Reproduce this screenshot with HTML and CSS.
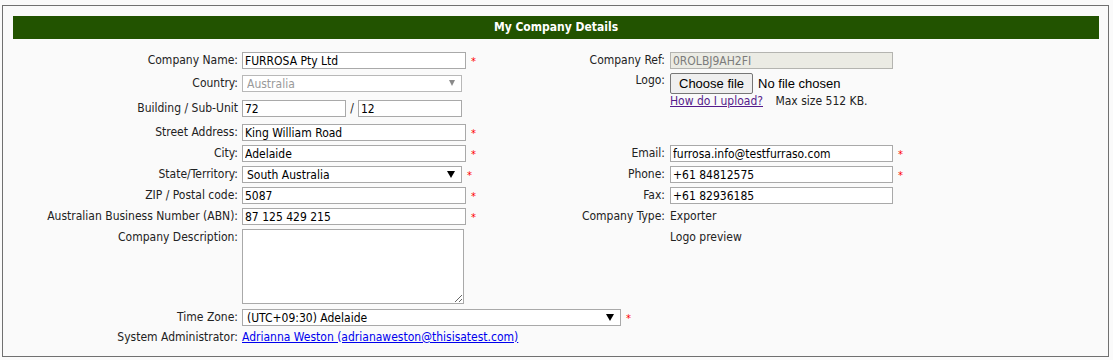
FILE: index.html
```html
<!DOCTYPE html>
<html lang="en">
<head>
    <meta charset="UTF-8">
    <title>My Company Details</title>
    <link rel="stylesheet" href="styles.css">
</head>
<body>
    <div class="panel">
        <div class="panel-title">My Company Details</div>

        <div class="form-grid">
            <!-- row 1 -->
            <label class="lbl">Company Name:</label>
            <div class="field"><input type="text" class="txt" value="FURROSA Pty Ltd"><span class="req">*</span></div>
            <label class="lbl lbl-right">Company Ref:</label>
            <div class="field field-right"><input type="text" class="txt txt-right" value="0ROLBJ9AH2FI" disabled></div>

            <!-- row 2 -->
            <label class="lbl">Country:</label>
            <div class="field">
                <div class="select select-disabled"><select class="sel sel-short" disabled><option>Australia</option></select></div>
            </div>
            <label class="lbl lbl-right lbl-logo">Logo:</label>
            <div class="field field-right field-logo">
                <div class="file-row">
                    <button type="button" class="file-btn">Choose file</button>
                    <span class="file-name">No file chosen</span>
                </div>
                <div class="upload-help">
                    <a href="#" class="visited">How do I upload?</a>
                    <span class="max-size">Max size 512 KB.</span>
                </div>
            </div>

            <!-- row 3 -->
            <label class="lbl">Building / Sub-Unit</label>
            <div class="field">
                <input type="text" class="txt txt-half" value="72">
                <span class="slash">/</span>
                <input type="text" class="txt txt-half" value="12">
            </div>

            <!-- row 4 -->
            <label class="lbl">Street Address:</label>
            <div class="field"><input type="text" class="txt" value="King William Road"><span class="req">*</span></div>

            <!-- row 5 -->
            <label class="lbl">City:</label>
            <div class="field"><input type="text" class="txt" value="Adelaide"><span class="req">*</span></div>
            <label class="lbl lbl-right">Email:</label>
            <div class="field field-right"><input type="text" class="txt txt-right" value="furrosa.info@testfurraso.com"><span class="req">*</span></div>

            <!-- row 6 -->
            <label class="lbl">State/Territory:</label>
            <div class="field">
                <div class="select"><select class="sel sel-short"><option>South Australia</option></select></div><span class="req">*</span>
            </div>
            <label class="lbl lbl-right">Phone:</label>
            <div class="field field-right"><input type="text" class="txt txt-right" value="+61 84812575"><span class="req">*</span></div>

            <!-- row 7 -->
            <label class="lbl">ZIP / Postal code:</label>
            <div class="field"><input type="text" class="txt" value="5087"><span class="req">*</span></div>
            <label class="lbl lbl-right">Fax:</label>
            <div class="field field-right"><input type="text" class="txt txt-right" value="+61 82936185"></div>

            <!-- row 8 -->
            <label class="lbl">Australian Business Number (ABN):</label>
            <div class="field"><input type="text" class="txt" value="87 125 429 215"><span class="req">*</span></div>
            <label class="lbl lbl-right">Company Type:</label>
            <div class="field field-right plain">Exporter</div>

            <!-- row 9 -->
            <label class="lbl">Company Description:</label>
            <div class="field"><textarea class="desc"></textarea></div>
            <div class="field field-right plain">Logo preview</div>

            <!-- row 10 -->
            <label class="lbl">Time Zone:</label>
            <div class="field field-wide">
                <div class="select"><select class="sel sel-long"><option>(UTC+09:30) Adelaide</option></select></div><span class="req">*</span>
            </div>

            <!-- row 11 -->
            <label class="lbl lbl-admin">System Administrator:</label>
            <div class="field field-wide field-admin">
                <a href="#" class="admin-link">Adrianna Weston (adrianaweston@thisisatest.com)</a>
            </div>
        </div>
    </div>
</body>
</html>
```

FILE: styles.css
```css
body {
    margin: 0;
    background: #fafafa;
    font-family: "DejaVu Sans Condensed", "DejaVu Sans", sans-serif;
    font-stretch: condensed;
    font-size: 12px;
    color: #222;
}

.panel {
    margin: 5px 4px 0 2px;
    border: 1px solid #707070;
    padding: 10px 9px 0 10px;
    height: 340px;
}

.panel-title {
    background-color: #225300;
    color: #fff;
    font-weight: bold;
    text-align: center;
    height: 23px;
    line-height: 23px;
}

.form-grid {
    margin-top: 11px;
    display: grid;
    grid-template-columns: 229px 300px 128px 1fr;
    grid-template-rows: 23px 25px 24px 21px 21px 21px 21px 21px 80px 23px 20px;
}

/* labels */
.lbl {
    grid-column: 1;
    text-align: right;
    padding-right: 4px;
    margin-top: 2px;
    line-height: 17px;
    white-space: nowrap;
}

.lbl-right {
    grid-column: 3;
    padding-right: 5px;
}

.lbl-logo {
    grid-row: span 2;
    line-height: 14px;
    margin-top: 0;
}

.lbl-admin {
    margin-top: 0;
    line-height: 14px;
}

/* field cells */
.field {
    grid-column: 2;
    display: flex;
    align-items: flex-start;
    margin-top: 2px;
}

.field-right {
    grid-column: 4;
}

.field-wide {
    grid-column: 2 / -1;
}

.field-logo {
    grid-row: span 2;
    flex-direction: column;
    margin-top: 0;
}

.field-admin {
    margin-top: 0;
    line-height: 14px;
}

.plain {
    line-height: 17px;
}

/* inputs */
.txt {
    box-sizing: border-box;
    width: 224px;
    height: 17px;
    margin: 0;
    padding: 0 2px;
    border: 1px solid #a9a9a9;
    background: #fff;
    font: inherit;
    color: #000;
}

.txt-right {
    width: 223px;
}

.txt:disabled {
    background: #ebebe4;
    border-color: #b4b4b0;
    color: #7b7b7b;
}

.txt-half {
    width: 104px;
}

.slash {
    width: 12px;
    text-align: center;
    line-height: 17px;
}

.req {
    color: #f00;
    margin-left: 5px;
    margin-top: 3px;
    line-height: 14px;
    font-size: 11px;
}

/* selects */
.select {
    position: relative;
}

.select::after {
    content: "";
    position: absolute;
    right: 7px;
    top: 5px;
    border-left: 4px solid transparent;
    border-right: 4px solid transparent;
    border-top: 7px solid #000;
    pointer-events: none;
}

.select-disabled::after {
    border-top-color: #8a8a8a;
    border-left-width: 3px;
    border-right-width: 3px;
    border-top-width: 6px;
}

.sel {
    -webkit-appearance: none;
    appearance: none;
    box-sizing: border-box;
    height: 17px;
    margin: 0;
    padding: 0 0 0 4px;
    border: 1px solid #a9a9a9;
    border-radius: 0;
    background: #fff;
    font: inherit;
    color: #000;
}

.sel:disabled {
    color: #9a9a9a;
    border-color: #b8b8b8;
    opacity: 1;
}

.sel-short {
    width: 220px;
}

.sel-long {
    width: 379px;
}

.desc {
    box-sizing: border-box;
    width: 222px;
    height: 75px;
    margin: 0;
    border: 1px solid #a9a9a9;
    background: #fff;
    font: inherit;
}

/* logo upload */
.file-row {
    display: flex;
    align-items: center;
    height: 21px;
}

.file-btn {
    box-sizing: border-box;
    height: 21px;
    padding: 0 8px;
    border: 1px solid #767676;
    border-radius: 2px;
    background: #efefef;
    color: #000;
    font-family: "Liberation Sans", Arial, sans-serif;
    font-size: 13px;
}

.file-name {
    margin-left: 5px;
    font-family: "Liberation Sans", Arial, sans-serif;
    font-size: 13px;
    color: #000;
}

.upload-help {
    line-height: 14px;
}

.visited {
    color: #551a8b;
}

.max-size {
    margin-left: 9px;
}

.admin-link {
    color: #0000ee;
}
```
